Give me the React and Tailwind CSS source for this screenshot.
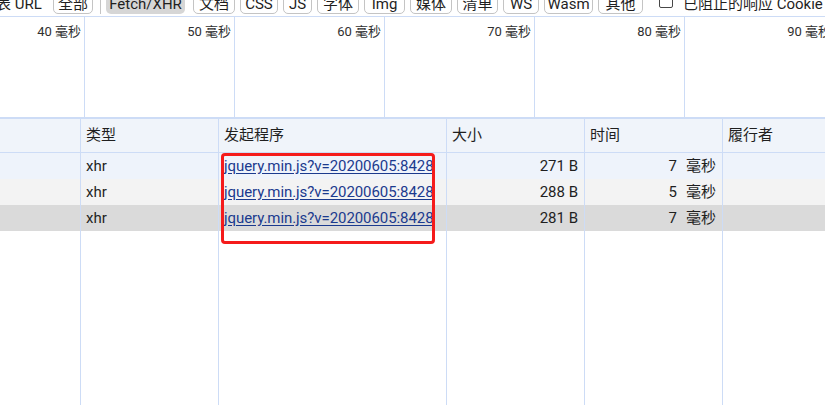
const font = { fontFamily: 'Roboto, "Noto Sans CJK SC", sans-serif' };

const filters = [
  { label: '文档', w: 'w-[42px]', ml: 'ml-[8px]' },
  { label: 'CSS', w: 'w-[38px]', ml: 'ml-[5px]' },
  { label: 'JS', w: 'w-[29px]', ml: 'ml-[5px]' },
  { label: '字体', w: 'w-[42px]', ml: 'ml-[5px]' },
  { label: 'Img', w: 'w-[41px]', ml: 'ml-[5px]' },
  { label: '媒体', w: 'w-[42px]', ml: 'ml-[5px]' },
  { label: '清单', w: 'w-[41px]', ml: 'ml-[5px]' },
  { label: 'WS', w: 'w-[36px]', ml: 'ml-[5px]' },
  { label: 'Wasm', w: 'w-[49px]', ml: 'ml-[5px]' },
  { label: '其他', w: 'w-[45px]', ml: 'ml-[5px]' },
];

const ticks = ['50', '60', '70', '80', '90'];

const rows = [
  { size: '271 B', time: '7', bg: 'bg-[#eef3fb]' },
  { size: '288 B', time: '5', bg: 'bg-[#f3f3f3]' },
  { size: '281 B', time: '7', bg: 'bg-[#dadada]' },
];

const cols = 'grid grid-cols-[81px_138px_228px_138px_138px_1fr]';
const cell = 'border-r border-[#cddcf6] h-full flex items-center px-[5px]';

function FilterButton({ label, w, ml, active }) {
  return (
    <div
      className={`${w} ${ml} h-[20px] shrink-0 rounded-[5px] flex items-center justify-center ${
        active ? 'bg-[#d6d6d6]' : 'bg-white border border-[#c4c4c4]'
      }`}
    >
      {label}
    </div>
  );
}

export default function App() {
  return (
    <div style={font} className="relative w-[825px] h-[405px] overflow-hidden bg-white text-[#1f1f1f] flex flex-col">
      {/* Toolbar */}
      <div className="h-[17px] shrink-0 border-b border-[#cddcf6] overflow-hidden flex items-end pb-[2px] text-[15px] whitespace-nowrap">
        <div className="w-[53px] shrink-0 h-[20px] flex items-center overflow-hidden">
          <span className="-ml-[4px]">表 URL</span>
        </div>
        <FilterButton label="全部" w="w-[40px]" ml="" />
        <div className="ml-[7px] w-px h-[20px] bg-[#c4c4c4] shrink-0" />
        <FilterButton label="Fetch/XHR" w="w-[79px]" ml="ml-[5px]" active />
        {filters.map(f => (
          <FilterButton key={f.label} {...f} />
        ))}
        <div className="ml-[16px] h-[20px] flex items-center shrink-0">
          <div className="w-[14px] h-[14px] rounded-[2px] border-[1.5px] border-[#474747] -mt-[6px]" />
          <span className="ml-[10px]">已阻止的响应 Cookie</span>
        </div>
      </div>

      {/* Timeline */}
      <div className="h-[102px] shrink-0 border-b-2 border-[#cddcf6] flex text-[13px] text-[#303030] whitespace-nowrap">
        <div className="w-[85px] shrink-0 border-r border-[#cddcf6] text-right pr-[3px] pt-[5px]">40 毫秒</div>
        {ticks.map(t => (
          <div key={t} className="w-[150px] shrink-0 border-r border-[#cddcf6] text-right pr-[3px] pt-[5px]">
            {t} 毫秒
          </div>
        ))}
      </div>

      {/* Table */}
      <div className="flex-1 flex flex-col text-[15px] whitespace-nowrap">
        <div className={`${cols} h-[34px] shrink-0 bg-[#f0f4fa] border-b border-[#cddcf6]`}>
          <div className={cell} />
          <div className={cell}>类型</div>
          <div className={cell}>发起程序</div>
          <div className={cell}>大小</div>
          <div className={cell}>时间</div>
          <div className={`${cell} border-r-0`}>履行者</div>
        </div>
        {rows.map((r, i) => (
          <div key={i} className={`${cols} h-[26px] shrink-0 ${r.bg}`}>
            <div className={cell} />
            <div className={cell}>xhr</div>
            <div className={`${cell} overflow-hidden`}>
              <span className="text-[#1b3a8e] underline underline-offset-2 tracking-[-0.07px]">jquery.min.js?v=20200605:8428</span>
            </div>
            <div className={`${cell} justify-end pr-[6px]`}>{r.size}</div>
            <div className={`${cell} justify-end pr-[6px]`}>
              <span>{r.time}</span>
              <span className="ml-[9px]">毫秒</span>
            </div>
            <div className={`${cell} border-r-0`} />
          </div>
        ))}
        <div className={`${cols} flex-1`}>
          <div className={cell} />
          <div className={cell} />
          <div className={cell} />
          <div className={cell} />
          <div className={cell} />
          <div />
        </div>
      </div>

      {/* Annotation */}
      <div className="absolute left-[221px] top-[153px] w-[214px] h-[91px] border-[3px] border-[#f51b1b] rounded-[4px]" />
    </div>
  );
}
